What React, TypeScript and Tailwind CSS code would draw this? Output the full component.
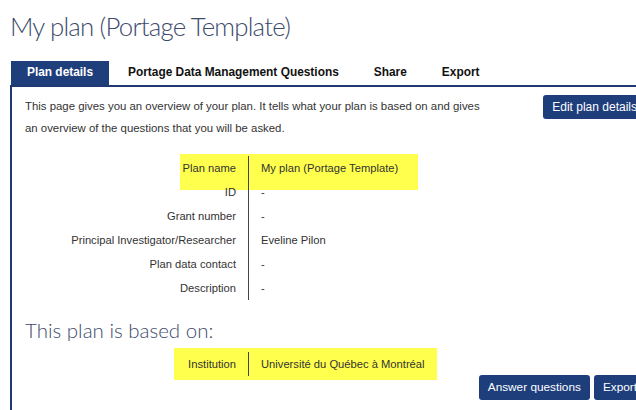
import React from "react";

const rows: [string, string][] = [
  ["Plan name", "My plan (Portage Template)"],
  ["ID", "-"],
  ["Grant number", "-"],
  ["Principal Investigator/Researcher", "Eveline Pilon"],
  ["Plan data contact", "-"],
  ["Description", "-"],
];

const tabs = ["Portage Data Management Questions", "Share", "Export"];

export default function App() {
  return (
    <div className="h-[410px] w-[636px] overflow-hidden bg-white font-['Liberation_Sans',Arial,sans-serif] text-[#333]">
      <div className="w-[646px] pl-[10px]">
        {/* page title */}
        <h1 className="pt-[9px] font-['Lato',sans-serif] text-[25.8px] font-light leading-[34px] tracking-[-0.8px] text-[#3c4a6c]">
          My plan (Portage Template)
        </h1>

        {/* tab bar */}
        <div className="mt-[18px] flex h-[26px] items-stretch border-b-2 border-[#1f3a73] text-[11.9px] font-bold text-[#111]">
          <div className="ml-[1px] flex w-[98px] items-center justify-center bg-[#1f3e7c] text-white">
            Plan details
          </div>
          {tabs.map((t, i) => (
            <div
              key={t}
              className={
                "flex items-center " + (i === 0 ? "ml-[19px]" : "ml-[35px]")
              }
            >
              {t}
            </div>
          ))}
        </div>

        {/* panel */}
        <div className="h-[330px] border-l-2 border-[#1f3a73] pl-[13px]">
          <div className="flex items-start justify-between pt-[8px]">
            <p className="text-[11.4px] leading-[22px]">
              This page gives you an overview of your plan. It tells what your plan is based on and gives
              <br />
              an overview of the questions that you will be asked.
            </p>
            <button className="h-[24px] rounded-[3px] bg-[#1d3d7b] px-[9px] text-[12px] text-white">
              Edit plan details
            </button>
          </div>

          {/* plan details table */}
          <div className="relative ml-[35px] mt-[17px] w-[400px]">
            <div className="absolute left-[120px] top-[-2px] h-[36px] w-[238px] bg-[#ffff4d]" />
            <div className="relative grid grid-cols-[189px_auto] text-[11.2px]">
              {rows.map(([k, v]) => (
                <React.Fragment key={k}>
                  <div className="flex h-[24px] items-center justify-end border-r border-[#444] pr-[12px]">
                    {k}
                  </div>
                  <div className="flex h-[24px] items-center pl-[12px]">{v}</div>
                </React.Fragment>
              ))}
            </div>
          </div>

          {/* based on */}
          <h2 className="mt-[16px] font-['Lato',sans-serif] text-[20.5px] font-light leading-[28px] text-[#3c4a6c]">
            This plan is based on:
          </h2>
          <div className="relative ml-[35px] mt-[8px] w-[400px]">
            <div className="absolute left-[114px] top-[-4px] h-[32px] w-[263px] bg-[#ffff4d]" />
            <div className="relative grid grid-cols-[189px_auto] text-[11.2px]">
              <div className="flex h-[24px] items-center justify-end border-r border-[#444] pr-[12px]">
                Institution
              </div>
              <div className="flex h-[24px] items-center pl-[12px]">
                Université du Québec à Montréal
              </div>
            </div>
          </div>

          <div className="-mt-[1px] flex justify-end gap-[4px]">
            <button className="h-[25px] rounded-[3px] bg-[#1d3d7b] px-[9px] text-[11.8px] text-white">
              Answer questions
            </button>
            <button className="h-[25px] rounded-[3px] bg-[#1d3d7b] px-[9px] text-[11.8px] text-white">
              Export
            </button>
          </div>
        </div>
      </div>
    </div>
  );
}
